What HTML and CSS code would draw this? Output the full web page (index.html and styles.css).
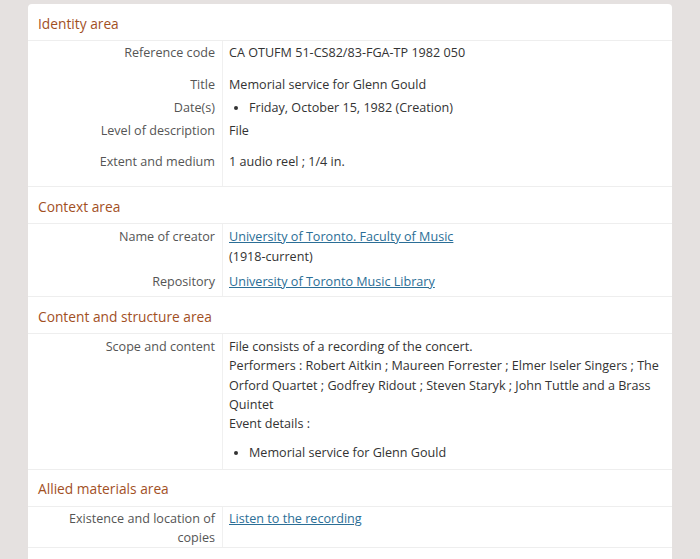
FILE: index.html
```html
<!DOCTYPE html>
<html>
<head>
<meta charset="utf-8">
<link rel="stylesheet" href="styles.css">
</head>
<body>
<div class="card">
  <section class="area">
    <h2 class="area-title">Identity area</h2>
    <div class="fields identity">
      <div class="label f-ref">Reference code</div><div class="value f-ref">CA OTUFM 51-CS82/83-FGA-TP 1982 050</div>
      <div class="label f-title">Title</div><div class="value f-title">Memorial service for Glenn Gould</div>
      <div class="label f-dates">Date(s)</div><div class="value f-dates"><ul class="list"><li>Friday, October 15, 1982 (Creation)</li></ul></div>
      <div class="label f-level">Level of description</div><div class="value f-level">File</div>
      <div class="label f-extent">Extent and medium</div><div class="value f-extent">1 audio reel ; 1/4 in.</div>
    </div>
  </section>
  <section class="area">
    <h2 class="area-title">Context area</h2>
    <div class="fields">
      <div class="label f-first">Name of creator</div><div class="value f-first"><a href="#">University of Toronto. Faculty of Music</a><br>(1918-current)</div>
      <div class="label f-repo">Repository</div><div class="value f-repo"><a href="#">University of Toronto Music Library</a></div>
    </div>
  </section>
  <section class="area">
    <h2 class="area-title">Content and structure area</h2>
    <div class="fields">
      <div class="label f-first f-scope">Scope and content</div><div class="value f-first f-scope">File consists of a recording of the concert.<br>Performers : Robert Aitkin ; Maureen Forrester ; Elmer Iseler Singers ; The Orford Quartet ; Godfrey Ridout ; Steven Staryk ; John Tuttle and a Brass Quintet<br>Event details :<ul class="list events"><li>Memorial service for Glenn Gould</li></ul></div>
    </div>
  </section>
  <section class="area">
    <h2 class="area-title">Allied materials area</h2>
    <div class="fields">
      <div class="label f-first f-last">Existence and location of copies</div><div class="value f-first f-last"><a href="#">Listen to the recording</a></div>
    </div>
  </section>
</div>
</body>
</html>
```

FILE: styles.css
```css
html, body {
  margin: 0;
  padding: 0;
}
body {
  background: #e5e1e0;
  font-family: "Open Sans", "Liberation Sans", sans-serif;
  font-size: 12.6px;
  line-height: 19.25px;
  color: #333;
  padding: 4px 28px 0 28px;
  height: 555px;
  overflow: hidden;
}
.card {
  background: #fff;
  border-radius: 4px 4px 0 0;
  height: 555px;
}
.area {
  border-bottom: 1px solid #eeeeee;
}
.area-title {
  margin: 0;
  font-size: 13.75px;
  font-weight: normal;
  color: #a2501f;
  height: 37px;
  box-sizing: border-box;
  padding: 9.5px 10px 0 10px;
  line-height: 20px;
  border-bottom: 1px solid #eeeeee;
}
.fields {
  display: grid;
  grid-template-columns: 195px 1fr;
}
.label {
  text-align: right;
  color: #555;
  padding: 3px 7px 0 20px;
  border-right: 1px solid #f0f0f0;
}
.value {
  padding: 3px 10px 0 6px;
}
.value a {
  color: #2b6e96;
  text-decoration: underline;
}
.identity .f-ref { padding-top: 2px; }
.identity .f-title { padding-top: 13px; }
.identity .f-dates { padding-top: 3px; }
.identity .f-level { padding-top: 4px; }
.identity .f-extent { padding-top: 12px; padding-bottom: 15px; }
.f-repo { padding-top: 6px; padding-bottom: 5px; }
.f-scope { padding-bottom: 6px; }
.f-last { padding-top: 2px; padding-bottom: 0; }
.list {
  margin: 0;
  padding-left: 20px;
}
.events {
  margin-top: 10px;
}
```
